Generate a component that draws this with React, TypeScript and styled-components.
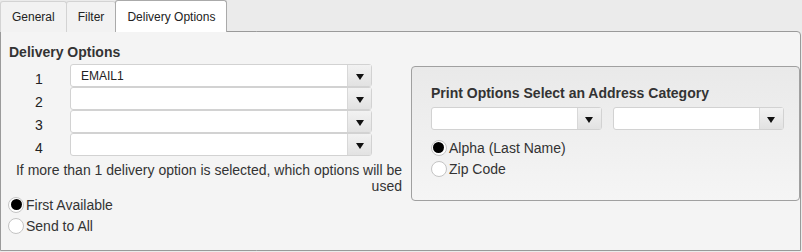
import React from 'react';
import styled, { createGlobalStyle } from 'styled-components';

const Global = createGlobalStyle`
  body {
    margin: 0;
    background: #ebebeb;
    font-family: "Liberation Sans", Arial, sans-serif;
    font-size: 13px;
    color: #222;
  }
`;

const Page = styled.div`
  width: 802px;
  height: 252px;
  display: flex;
  flex-direction: column;
`;

const TabBar = styled.div`
  display: flex;
  height: 32px;
  align-items: flex-end;
  position: relative;
  z-index: 1;
`;

const Tab = styled.div<{ $active?: boolean }>`
  height: ${p => (p.$active ? '32px' : '31px')};
  box-sizing: border-box;
  padding: 0 11px;
  display: flex;
  align-items: center;
  font-size: 12px;
  border: 1px solid ${p => (p.$active ? '#aaa' : '#d3d3d3')};
  border-bottom: none;
  border-radius: 3px 3px 0 0;
  background: ${p => (p.$active ? '#fff' : '#f2f2f2')};
  margin-right: -1px;
  color: #222;
`;

const Panel = styled.div`
  flex: 1;
  margin-top: -1px;
  margin-right: 1px;
  margin-bottom: 1px;
  border: 1px solid #9a9a9a;
  border-radius: 0 4px 0 0;
  background: #f4f4f4;
  display: flex;
  padding: 0 0 0 7px;
`;

const LeftCol = styled.div`
  width: 395px;
  display: flex;
  flex-direction: column;
`;

const Heading = styled.div`
  font-weight: bold;
  font-size: 14px;
  color: #333;
  margin: 12px 0 4px 1px;
`;

const OptionRow = styled.div`
  display: flex;
  align-items: center;
  height: 23px;
`;

const Num = styled.div`
  width: 62px;
  text-align: center;
  font-size: 14px;
  padding-top: 7px;
`;

const Select = styled.div<{ $w: number }>`
  width: ${p => p.$w}px;
  height: 23px;
  box-sizing: border-box;
  border: 1px solid #d2d2d2;
  border-radius: 3px;
  background: #fff;
  display: flex;
  align-items: stretch;
`;

const SelectValue = styled.div`
  flex: 1;
  padding-left: 10px;
  display: flex;
  align-items: center;
  font-size: 12px;
`;

const Arrow = styled.div`
  width: 23px;
  background: linear-gradient(#f2f2f2, #e2e2e2);
  border-left: 1px solid #d8d8d8;
  display: flex;
  align-items: center;
  justify-content: center;
  &::after {
    content: '';
    border-left: 4px solid transparent;
    border-right: 4px solid transparent;
    border-top: 6px solid #111;
    margin-top: 2px;
  }
`;

const Note = styled.div`
  text-align: right;
  font-size: 14px;
  line-height: 16px;
  color: #333;
  margin-top: 6px;
  padding-left: 6px;
`;

const RadioRow = styled.label`
  display: flex;
  align-items: center;
  height: 21px;
  font-size: 14px;
  color: #333;
`;

const Dot = styled.span<{ $on?: boolean }>`
  width: 16px;
  height: 16px;
  box-sizing: border-box;
  border-radius: 50%;
  border: 1px solid #c4c4c4;
  background: #fff;
  margin-right: 2px;
  display: flex;
  align-items: center;
  justify-content: center;
  &::after {
    content: '';
    display: ${p => (p.$on ? 'block' : 'none')};
    width: 11px;
    height: 11px;
    border-radius: 50%;
    background: #000;
  }
`;

const PrintBox = styled.div`
  margin: 34px 0 0 9px;
  width: 390px;
  height: 135px;
  box-sizing: border-box;
  border: 1px solid #a0a0a0;
  border-radius: 4px;
  background: linear-gradient(#e9e9e9, #f5f5f5);
  padding: 18px 0 0 19px;
  display: flex;
  flex-direction: column;
`;

const PrintHeading = styled.div`
  font-weight: bold;
  font-size: 14px;
  color: #333;
  margin-bottom: 6px;
`;

const SelectPair = styled.div`
  display: flex;
  gap: 11px;
  margin-bottom: 7px;
`;

const options = ['EMAIL1', '', '', ''];

export default function App() {
  return (
    <Page>
      <Global />
      <TabBar>
        <Tab>General</Tab>
        <Tab>Filter</Tab>
        <Tab $active>Delivery Options</Tab>
      </TabBar>
      <Panel>
        <LeftCol>
          <Heading>Delivery Options</Heading>
          {options.map((v, i) => (
            <OptionRow key={i}>
              <Num>{i + 1}</Num>
              <Select $w={302}>
                <SelectValue>{v}</SelectValue>
                <Arrow />
              </Select>
            </OptionRow>
          ))}
          <Note>
            If more than 1 delivery option is selected, which options will be
            <br />
            used
          </Note>
          <RadioRow>
            <Dot $on />
            First Available
          </RadioRow>
          <RadioRow>
            <Dot />
            Send to All
          </RadioRow>
        </LeftCol>
        <PrintBox>
          <PrintHeading>Print Options Select an Address Category</PrintHeading>
          <SelectPair>
            <Select $w={171}>
              <SelectValue />
              <Arrow />
            </Select>
            <Select $w={171}>
              <SelectValue />
              <Arrow />
            </Select>
          </SelectPair>
          <RadioRow>
            <Dot $on />
            Alpha (Last Name)
          </RadioRow>
          <RadioRow>
            <Dot />
            Zip Code
          </RadioRow>
        </PrintBox>
      </Panel>
    </Page>
  );
}
